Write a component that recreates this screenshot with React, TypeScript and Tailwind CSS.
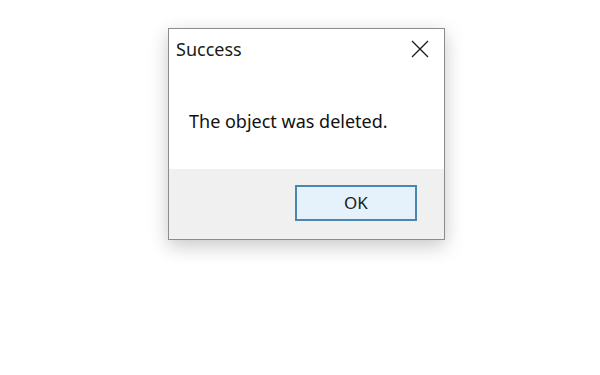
import React from 'react';

function CloseIcon() {
  return (
    <svg width="18" height="18" viewBox="0 0 18 18" fill="none" stroke="#1a1a1a" strokeWidth="1.3">
      <path d="M1 1 L17 17 M17 1 L1 17" />
    </svg>
  );
}

export default function App() {
  return (
    <div className="w-[600px] h-[375px] bg-white pt-[28px] pl-[168px]" style={{ fontFamily: '"Noto Sans", "Open Sans", sans-serif' }}>
      <div className="w-[277px] h-[212px] flex flex-col border border-[#8c8c8c] bg-white shadow-[0_6px_18px_rgba(0,0,0,0.22)]">
        {/* title */}
        <div className="h-[40px] flex items-center justify-between pl-[7px] pr-[15px]">
          <span className="text-[18px] text-[#1a1a1a]">Success</span>
          <CloseIcon />
        </div>

        {/* message */}
        <div className="h-[100px] flex items-center pl-[20px] pt-[5px]">
          <span className="text-[18px] text-[#111]">The object was deleted.</span>
        </div>

        {/* buttons */}
        <div className="flex-1 bg-[#f0f0f0] flex justify-end items-start pt-[16px] pr-[27px]">
          <button className="w-[122px] h-[36px] border-2 border-[#4a86ad] bg-[#e5f1fb] text-[17px] text-[#1a1a1a] flex items-center justify-center">
            OK
          </button>
        </div>
      </div>
    </div>
  );
}
